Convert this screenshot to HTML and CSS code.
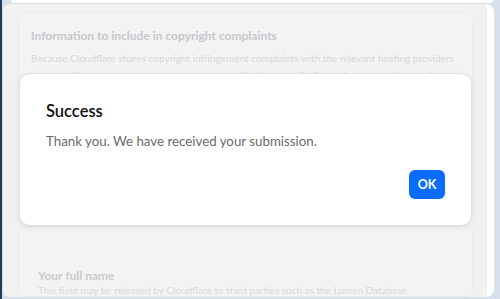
FILE: index.html
```html
<!DOCTYPE html>
<html lang="en">
<head>
  <meta charset="UTF-8" />
  <meta name="viewport" content="width=device-width, initial-scale=1.0"/>
  <title>Copyright complaint</title>
  <link rel="stylesheet" href="styles.css">
</head>
<body>

  <div class="frame">
    <div class="top-strip"></div>

    <div class="panel">
      <div class="content">
        <section class="card">
          <h2 class="card-title">Information to include in copyright complaints</h2>
          <p class="card-text">Because Cloudflare shares copyright infringement complaints with the relevant hosting providers and website operators, we only process reports that include all information required by section 512(c)(3) of the Digital Millennium Copyright Act.</p>
        </section>

        <section class="card field-card">
          <label class="field-label">Your full name</label>
          <p class="field-hint">This field may be released by Cloudflare to third parties such as the Lumen Database.</p>
        </section>
      </div>
      <div class="scroll-track"></div>
    </div>

    <div class="modal">
      <h1 class="modal-title">Success</h1>
      <p class="modal-text">Thank you. We have received your submission.</p>
      <div class="modal-actions">
        <button class="ok-btn">OK</button>
      </div>
    </div>
  </div>

</body>
</html>
```

FILE: styles.css
```css
body {
  margin: 0;
  width: 500px;
  height: 299px;
  overflow: hidden;
  background: #d6e0ec;
  font-family: Lato, "Noto Sans", Arial, sans-serif;
}
.frame {
  position: relative;
  height: 299px;
  border-left: 2px solid #243d5c;
  box-sizing: border-box;
  padding: 0 6px 2px 1px;
  display: flex;
  flex-direction: column;
}
.top-strip {
  height: 3px;
  margin: 0 1px 1px 8px;
  background: #fff;
  border-radius: 0 0 4px 4px;
}
.panel {
  flex: 1;
  display: flex;
  border-radius: 6px 8px 8px 6px;
  overflow: hidden;
}
.content {
  flex: 1;
  background: #f1f1f2;
  padding: 8px 14px 0 15px;
  display: flex;
  flex-direction: column;
  gap: 7px;
}
.scroll-track {
  width: 7px;
  background: #fff;
}
.card {
  background: #f3f3f4;
  border: 1px solid #ececee;
  border-radius: 8px;
  padding: 15px 12px 0 12px;
  height: 208px;
  box-sizing: border-box;
}
.card-title {
  margin: 0;
  font-size: 12px;
  font-weight: 700;
  color: #c6c8cb;
}
.card-text {
  margin: 7px 0 0;
  font-size: 10px;
  line-height: 16.5px;
  color: #d6d8db;
}
.field-card {
  flex: 1;
  padding: 41px 19px 0;
}
.field-label {
  display: block;
  font-size: 12px;
  font-weight: 700;
  color: #c9cbce;
}
.field-hint {
  margin: 1px 0 0;
  font-size: 10px;
  color: #d8dadd;
}
.modal {
  position: absolute;
  left: 17px;
  top: 73px;
  width: 453px;
  height: 153px;
  box-sizing: border-box;
  background: #fff;
  border: 1px solid #e2e2e4;
  border-radius: 11px;
  box-shadow: 0 2px 6px rgba(0, 0, 0, 0.08);
  padding: 27px 26px 26px;
  display: flex;
  flex-direction: column;
}
.modal-title {
  margin: 0;
  font-size: 16.5px;
  font-weight: 600;
  color: #111;
}
.modal-text {
  margin: 12px 0 0;
  font-size: 13.3px;
  color: #6b6b6b;
}
.modal-actions {
  margin-top: auto;
  display: flex;
  justify-content: flex-end;
}
.ok-btn {
  width: 36px;
  height: 29px;
  border: none;
  border-radius: 6px;
  background: #0a6cff;
  color: #fff;
  font-family: inherit;
  font-size: 12.5px;
  font-weight: 700;
  padding: 0;
  cursor: pointer;
}
```
